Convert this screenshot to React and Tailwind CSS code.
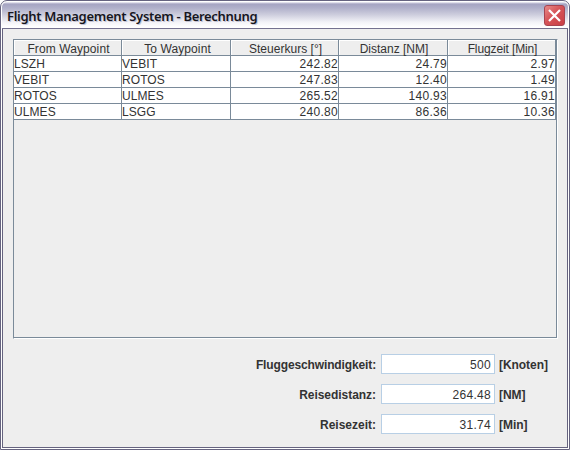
const legs = [
  ['LSZH', 'VEBIT', '242.82', '24.79', '2.97'],
  ['VEBIT', 'ROTOS', '247.83', '12.40', '1.49'],
  ['ROTOS', 'ULMES', '265.52', '140.93', '16.91'],
  ['ULMES', 'LSGG', '240.80', '86.36', '10.36'],
];

const headers = [
  ['From Waypoint', 'tracking-[0.1px] pl-px'],
  ['To Waypoint', 'tracking-[0.1px] pl-[2px]'],
  ['Steuerkurs [°]', 'tracking-[0.03px] pl-px'],
  ['Distanz [NM]', 'tracking-[0px] pl-px'],
  ['Flugzeit [Min]', 'tracking-[-0.12px] pl-px'],
];

const totals = [
  ['Fluggeschwindigkeit:', '500', '[Knoten]', 'tracking-[-0.13px]'],
  ['Reisedistanz:', '264.48', '[NM]', 'tracking-[-0.04px]'],
  ['Reisezeit:', '31.74', '[Min]', 'tracking-[0px]'],
];

const columns = 'grid grid-cols-[108px_109px_108px_109px_108px]';

function TitleBar() {
  return (
    <div className="flex h-[27px] items-center justify-between rounded-t-[5px] border-b border-[#74718f] bg-[linear-gradient(to_bottom,#f4f4f9_0px,#a5a4c2_2px,#b0b0ca_6px,#cfcfde_13px,#f2f2f7_20px,#ffffff_25px)] pr-[3px] pl-[5px]">
      <h1 className="pt-px font-['Noto_Sans',sans-serif] text-[13px] leading-[18px] font-semibold tracking-[-0.31px] whitespace-nowrap text-[#16161e] [text-shadow:1px_1px_0_#c4c4d4]">
        Flight Management System - Berechnung
      </h1>
      <button
        aria-label="Close"
        className="flex h-[21px] w-[21px] items-center justify-center rounded-[3px] border border-[#a84450] bg-[linear-gradient(135deg,#e88a88,#d65458_45%,#c93e45)]"
      >
        <svg width="13" height="13" viewBox="0 0 13 13" fill="none" stroke="#fff" strokeWidth="2.2">
          <path d="M1 1L12 12M12 1L1 12" />
        </svg>
      </button>
    </div>
  );
}

function WaypointTable() {
  return (
    <div className="h-[300px] w-[545px] border-t border-r border-b border-l border-t-[#7a8a99] border-r-white border-b-white border-l-[#7a8a99]">
      <div className="h-[298px] border-r border-b border-[#7a8a99]">
        <div className={columns}>
          {headers.map(([title, fit]) => (
            <div
              key={title}
              className="flex h-4 border-r border-b border-[#7a8a99]"
            >
              <div
                className={`flex-1 border-t border-l border-white text-center text-[12px] leading-[16px] whitespace-nowrap ${fit}`}
              >
                {title}
              </div>
            </div>
          ))}
        </div>
        {legs.map((leg) => (
          <div key={leg[0]} className={`${columns} bg-white`}>
            {leg.map((value, i) => (
              <div
                key={value}
                className={`h-4 border-r border-b border-[#7a8a99] text-[12px] leading-[17px] ${i > 1 ? 'text-right tracking-[0.3px]' : 'tracking-[0.08px]'}`}
              >
                {value}
              </div>
            ))}
          </div>
        ))}
      </div>
    </div>
  );
}

export default function App() {
  return (
    <div className="h-[450px] w-[570px] bg-white font-['Liberation_Sans',Arial,sans-serif] text-[#333333]">
      <div className="h-[450px] rounded-t-[7px] border border-[#65637f] bg-white p-px">
        <TitleBar />
        <div className="flex h-[419px] flex-col border-x border-b border-[#65637f] bg-[#eeeeee] pt-[10px] pl-[10px]">
          <WaypointTable />
          <div className="mt-[15px] flex flex-col gap-[10px]">
            {totals.map(([label, value, unit, fit]) => (
              <label key={label} className="grid h-5 grid-cols-[364px_114px_auto] items-center gap-x-1 text-[12px] font-bold">
                <span className={`pt-[2px] pr-px text-right ${fit}`}>{label}</span>
                <input
                  readOnly
                  value={value}
                  className="h-5 w-[114px] border border-[#b8cfe5] bg-white pt-[2px] pr-[3px] text-right text-[12px] font-normal tracking-[0.3px] outline-none"
                />
                <span className="pt-[2px] tracking-[-0.05px]">{unit}</span>
              </label>
            ))}
          </div>
        </div>
      </div>
    </div>
  );
}
